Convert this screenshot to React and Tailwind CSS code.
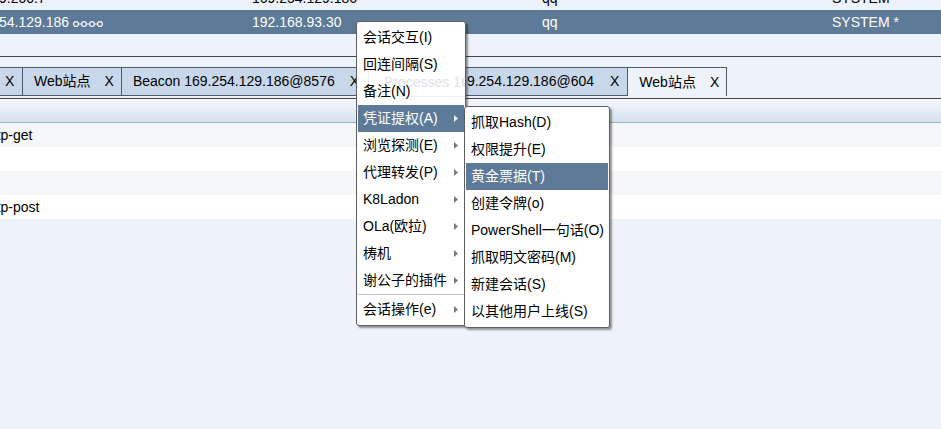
import React from 'react';

const FONT = { fontFamily: '"Liberation Sans", Arial, "Noto Sans CJK SC", sans-serif' };

const MAIN_MENU = [
  { label: '会话交互(I)' },
  { label: '回连间隔(S)' },
  { label: '备注(N)' },
  { label: '凭证提权(A)', sub: true, active: true },
  { label: '浏览探测(E)', sub: true },
  { label: '代理转发(P)', sub: true },
  { label: 'K8Ladon', sub: true },
  { label: 'OLa(欧拉)', sub: true },
  { label: '梼机', sub: true },
  { label: '谢公子的插件', sub: true },
  { sep: true },
  { label: '会话操作(e)', sub: true },
];

const SUB_MENU = [
  { label: '抓取Hash(D)' },
  { label: '权限提升(E)' },
  { label: '黄金票据(T)', active: true },
  { label: '创建令牌(o)' },
  { label: 'PowerShell一句话(O)' },
  { label: '抓取明文密码(M)' },
  { label: '新建会话(S)' },
  { label: '以其他用户上线(S)' },
];

const TABS = [
  { label: 'Web站点', cls: 'pl-[11px] pr-[7px] gap-[14px]' },
  { label: 'Beacon 169.254.129.186@8576', cls: 'pl-[11px] pr-[7px] gap-[15px]' },
  { label: 'Processes 169.254.129.186@604', cls: 'pl-[15px] pr-[8px] gap-[16px]' },
  { label: 'Web站点', active: true, cls: 'pl-[11px] pr-[7px] gap-[14px]' },
];

const Chain = () => (
  <svg width="30" height="8" viewBox="0 0 30 8" className="ml-[4px] mt-[3px]">
    {[3, 11, 19, 27].map((cx) => (
      <circle key={cx} cx={cx} cy="4" r="2.4" fill="none" stroke="white" strokeWidth="1.1" />
    ))}
    <path d="M5.4 4H8.6M13.4 4H16.6M21.4 4H24.6" stroke="white" strokeWidth="1.1" />
  </svg>
);

const Arrow = ({ light }) => (
  <svg width="4" height="7" viewBox="0 0 4 7" className="ml-auto mr-[6px]">
    <path d="M0 0L4 3.5L0 7Z" fill={light ? '#e8eef5' : '#7a7a7a'} />
  </svg>
);

const TableRow = ({ cells, selected }) => (
  <div className={`flex h-[24px] items-center text-[14px] ${selected ? 'bg-[#5d7a98] text-white' : 'text-black'}`}>
    <div className="w-[288px] shrink-0 flex items-center -ml-[36px]">
      <span className="whitespace-nowrap">{cells[0]}</span>
      {selected && <Chain />}
    </div>
    <div className="w-[290px] shrink-0 whitespace-nowrap">{cells[1]}</div>
    <div className="w-[290px] shrink-0 whitespace-nowrap">{cells[2]}</div>
    <div className="flex-1 whitespace-nowrap">{cells[3]}</div>
  </div>
);

export default function App() {
  return (
    <div className="relative w-[941px] h-[429px] overflow-hidden bg-[#eef2fa]" style={FONT}>
      {/* session table */}
      <div className="h-[57px] overflow-hidden border-b border-[#3d4857]">
        <div className="-mt-[14px]">
          <TableRow cells={['172.19.200.7', '169.254.129.186', 'qq', 'SYSTEM']} />
          <TableRow cells={['169.254.129.186', '192.168.93.30', 'qq', 'SYSTEM *']} selected />
        </div>
      </div>

      {/* tab strip */}
      <div className="h-[42px] pt-[10px] border-b border-[#3d4857] flex items-start text-[14px] text-black">
        <div className="h-[29px] w-[23px] shrink-0 flex items-center pl-[5px] bg-[#c8d8ea] border-y border-r border-[#4b5b6c]">
          X
        </div>
        {TABS.map((t, i) => (
          <div
            key={i}
            className={`h-[29px] shrink-0 flex items-center ${t.cls} border-r border-t border-[#4b5b6c] whitespace-nowrap ${
              t.active ? 'bg-[#eef2fa]' : 'bg-[#c8d8ea] border-b'
            }`}
          >
            <span>{t.label}</span>
            <span>X</span>
          </div>
        ))}
      </div>

      {/* listener table */}
      <div className="h-[24px] border-b border-[#94b3d3] bg-gradient-to-b from-[#f6f9fe] to-[#d5e1ee]" />
      <div className="text-[14px] text-black">
        {['http-get', '', '', 'http-post'].map((v, i) => (
          <div key={i} className={`h-[24px] flex items-center ${i % 2 === 0 ? 'bg-[#f5f6f8]' : 'bg-white'}`}>
            <span className="-ml-[15px] whitespace-nowrap">{v}</span>
          </div>
        ))}
      </div>

      {/* context menu */}
      <div className="absolute left-[356px] top-[21px] w-[110px] py-[2px] px-px bg-white border border-[#5e5e5e] rounded-[3px] shadow-[2px_2px_2px_rgba(0,0,0,0.4)] text-[14px]">
        {/* faint repaint of the tab strip seen through the menu */}
        <div className="absolute left-[11px] top-[45px] h-[30px] w-[97px] border-l border-b border-[#eef0f3] pointer-events-none overflow-hidden">
          <span className="absolute left-[15px] top-[5px] text-[#e0e2e6] whitespace-nowrap">Processes 169.254</span>
        </div>
        {MAIN_MENU.map((m, i) =>
          m.sep ? (
            <div key={i} className="h-[2px] border-t border-[#c4c4c4] bg-white" />
          ) : (
            <div
              key={i}
              className={`relative h-[27px] flex items-center pl-[5px] whitespace-nowrap ${
                m.active ? 'bg-[#5d7a98] text-white' : 'text-black'
              }`}
            >
              <span>{m.label}</span>
              {m.sub && <Arrow light={m.active} />}
            </div>
          )
        )}
      </div>

      {/* submenu */}
      <div className="absolute left-[464px] top-[106px] w-[146px] py-[2px] px-px bg-white border border-[#5e5e5e] rounded-[3px] shadow-[2px_2px_2px_rgba(0,0,0,0.4)] text-[14px]">
        {SUB_MENU.map((m, i) => (
          <div
            key={i}
            className={`h-[27px] flex items-center pl-[5px] whitespace-nowrap ${
              m.active ? 'bg-[#5d7a98] text-white' : 'text-black'
            }`}
          >
            {m.label}
          </div>
        ))}
      </div>
    </div>
  );
}
